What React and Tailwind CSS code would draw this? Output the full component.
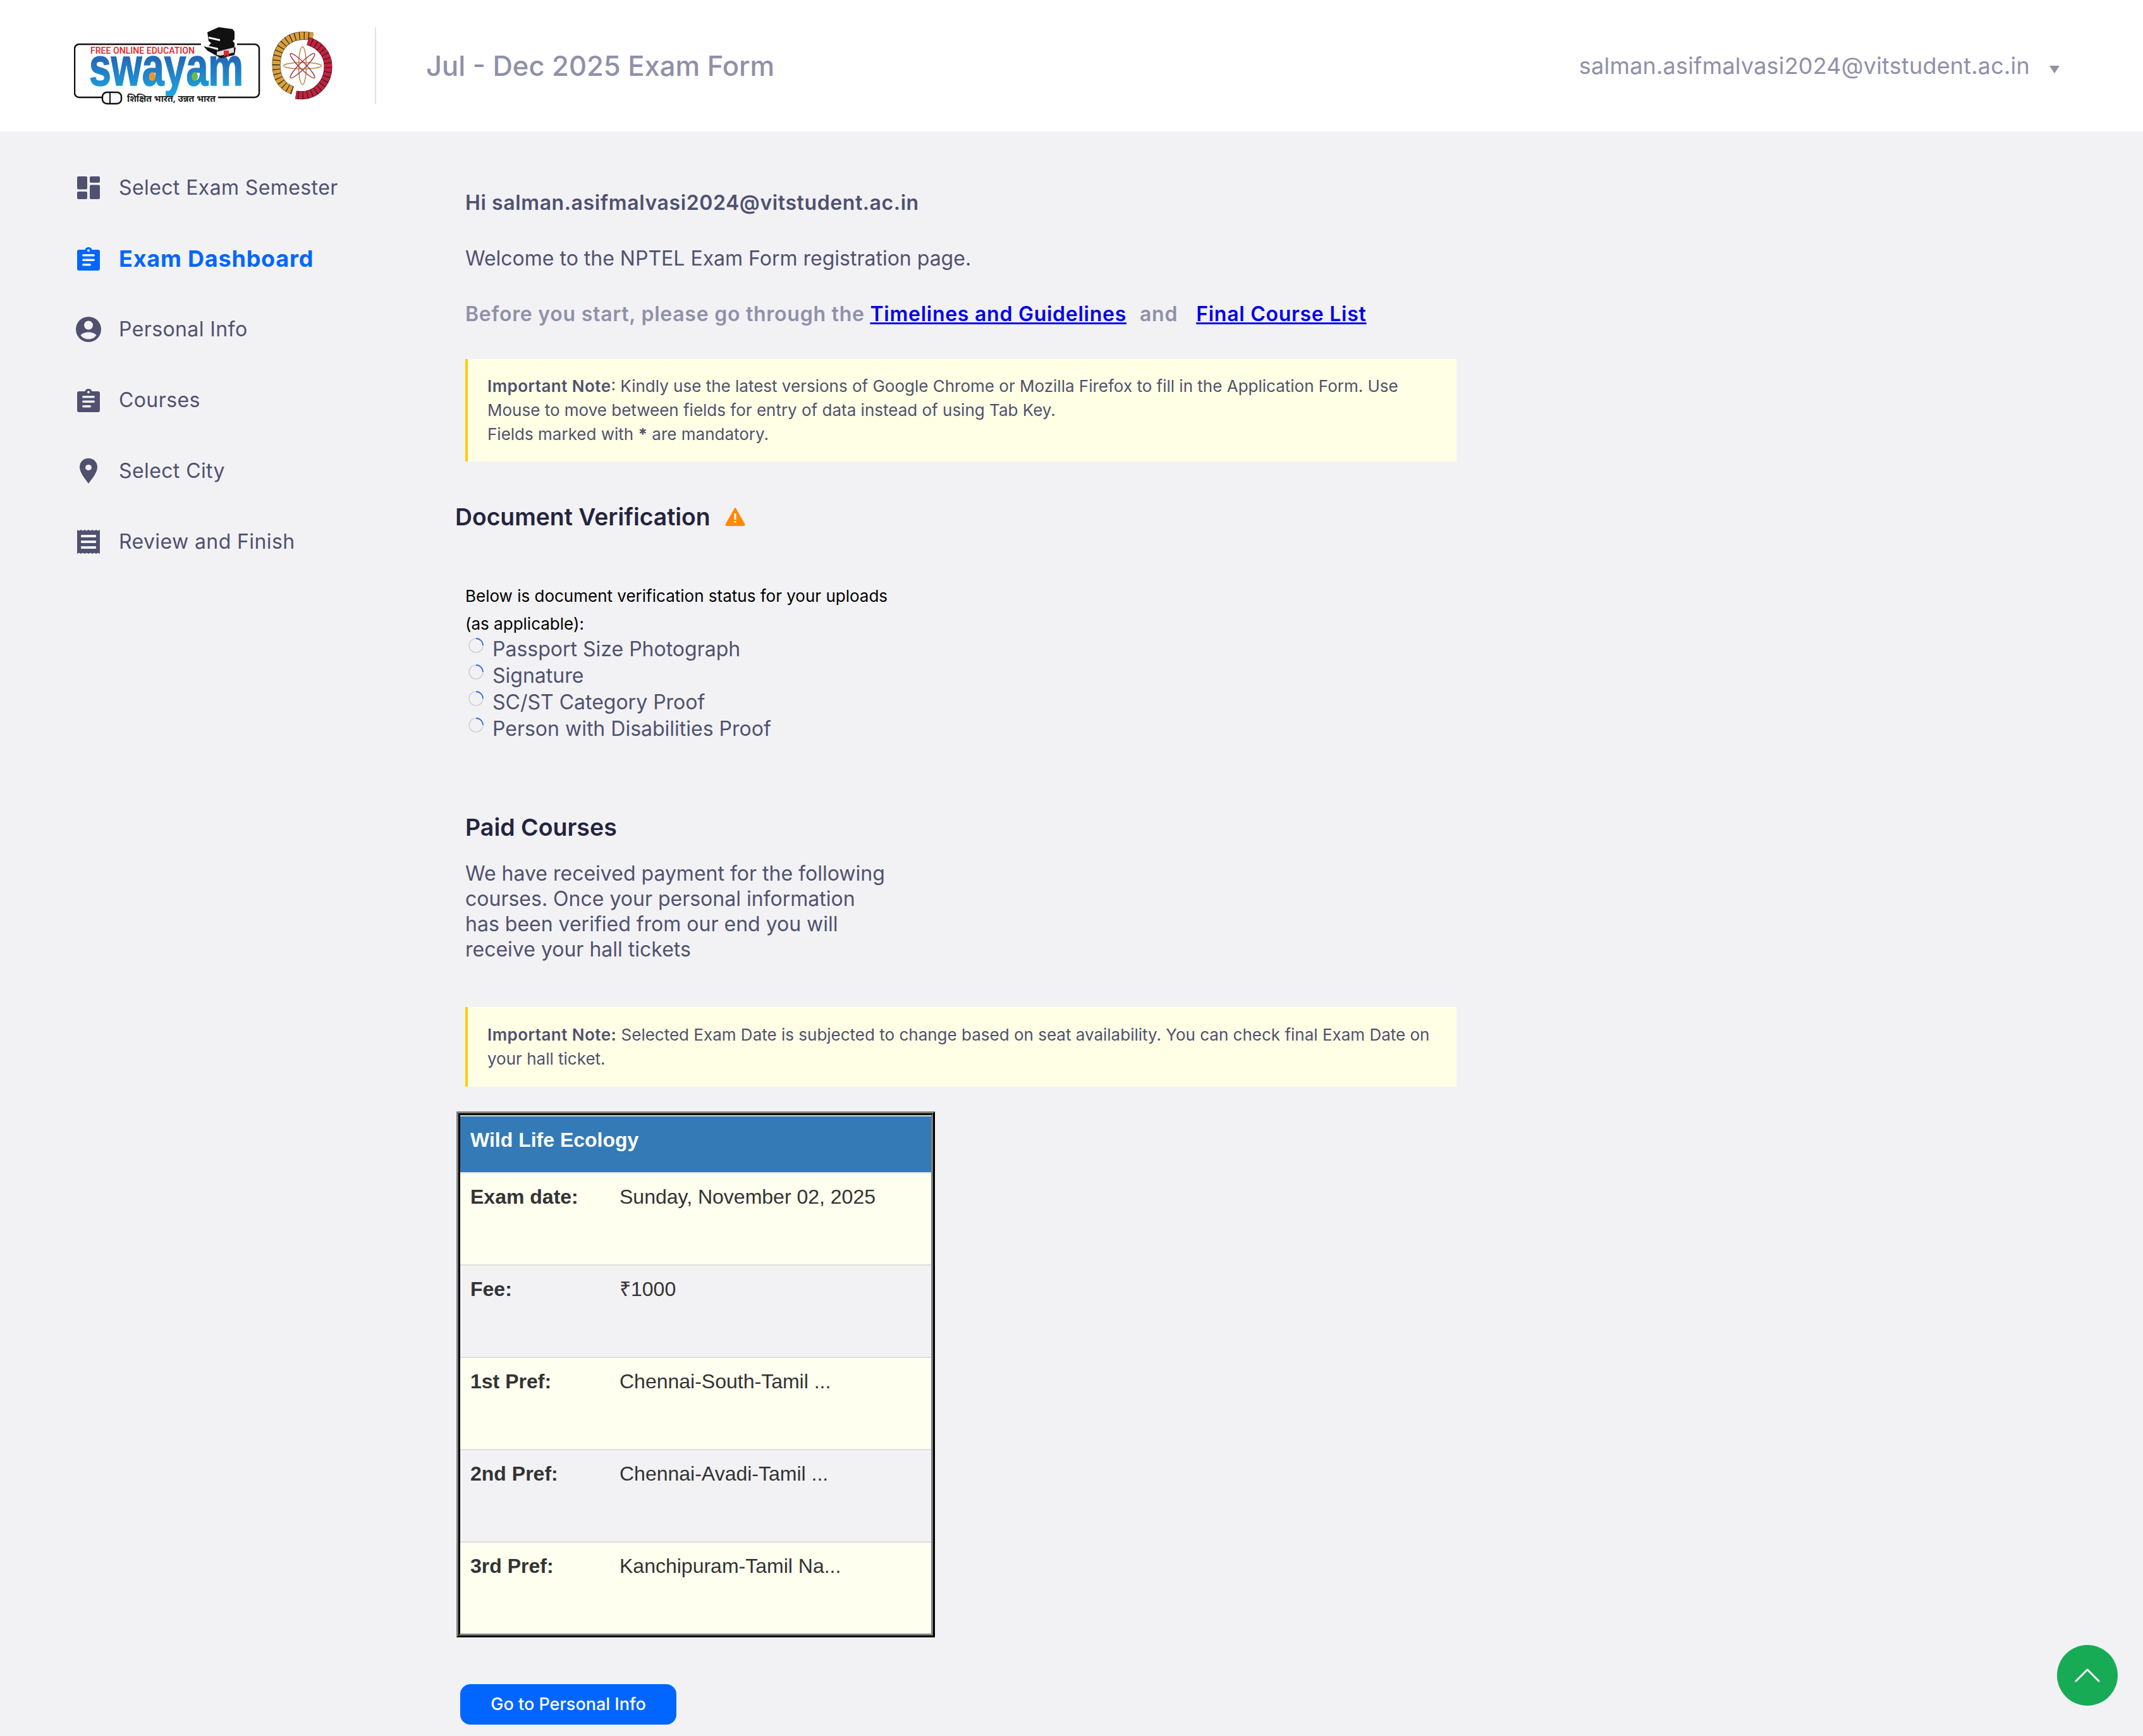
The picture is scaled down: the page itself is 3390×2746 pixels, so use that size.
const Ic = ({ children, active }) => (
  <svg width="40" height="40" viewBox="0 0 40 40" className={active ? "text-[#0066ff] shrink-0" : "text-[#50516f] shrink-0"} fill="currentColor">{children}</svg>
);
const Clip = () => (
  <>
    <path fillRule="evenodd" d="M5 6h9.500c.6-2.600 2.800-4 5.500-4s4.900 1.400 5.500 4H35a3 3 0 0 1 3 3v27a3 3 0 0 1-3 3H5a3 3 0 0 1-3-3V9a3 3 0 0 1 3-3zm15-.8a2 2 0 1 0 0 4 2 2 0 0 0 0-4z" />
    <g fill="#f2f2f5"><rect x="10" y="13" width="20" height="3.400" rx="1.700" /><rect x="10" y="20.500" width="20" height="3.400" rx="1.700" /><rect x="10" y="28" width="14" height="3.400" rx="1.700" /></g>
  </>
);
const items = [
  ["Select Exam Semester", <><rect x="2" y="2" width="16" height="20.500" rx="2" /><rect x="22" y="2" width="16" height="10" rx="2" /><rect x="2" y="26" width="16" height="12" rx="2" /><rect x="22" y="15.500" width="16" height="22.500" rx="2" /></>],
  ["Exam Dashboard", <Clip />],
  ["Personal Info", <path fillRule="evenodd" d="M20 0a20 20 0 1 0 0 40 20 20 0 0 0 0-40zm0 6.500a7 7 0 1 1 0 14 7 7 0 0 1 0-14zm0 29c-5.400 0-10-2.500-12.500-6.300 2-3 7.500-4.700 12.500-4.700s10.500 1.700 12.500 4.700C30 33 25.400 35.500 20 35.500z" />],
  ["Courses", <Clip />],
  ["Select City", <path fillRule="evenodd" d="M20 0C10.500 0 6 7 6 14c0 9 10 20 14 26 4-6 14-17 14-26C34 7 29.500 0 20 0zm0 10a5 4.500 0 1 1 0 9 5 4.500 0 0 1 0-9z" />],
  ["Review and Finish", <><path d="M2 1l3 1.500L8 1l3 1.500L14 1l3 1.500L20 1l3 1.500L26 1l3 1.500L32 1l3 1.500L38 1v38l-3-1.500-3 1.500-3-1.500-3 1.500-3-1.500-3 1.500-3-1.500-3 1.500-3-1.500-3 1.500-3-1.500L2 39z" /><g fill="#f2f2f5"><rect x="8" y="9" width="24" height="4" rx="1" /><rect x="8" y="18" width="24" height="4" rx="1" /><rect x="8" y="27" width="24" height="4" rx="1" /></g></>],
];
const Logo = () => (
  <svg width="415" height="128" viewBox="117 40 415 128" className="ml-[117px] shrink-0">
    <defs>
      <linearGradient id="sw" x1="0" y1="0" x2="0" y2="1"><stop offset="0" stopColor="#2647a0" /><stop offset="1" stopColor="#1ca9e2" /></linearGradient>
    </defs>
    <path d="M318 70H125a7 7 0 0 0-7 7v70a7 7 0 0 0 7 7h37M345 154h58a7 7 0 0 0 7-7V77a7 7 0 0 0-7-7h-28" fill="none" stroke="#111" strokeWidth="2.500" />
    <rect x="162" y="146" width="30" height="18" rx="7" fill="#fff" stroke="#111" strokeWidth="2.500" />
    <line x1="174" y1="146" x2="174" y2="164" stroke="#111" strokeWidth="2" />
    <text x="143" y="85" fontFamily="Roboto, sans-serif" fontSize="15" fontWeight="500" fill="#e2262b" textLength="165" lengthAdjust="spacingAndGlyphs">FREE ONLINE EDUCATION</text>
    <text x="141" y="135" fontFamily="Liberation Sans, sans-serif" fontSize="85" fontWeight="700" fill="url(#sw)" stroke="url(#sw)" strokeWidth="1.500" textLength="244" lengthAdjust="spacingAndGlyphs">swayam</text>
    <ellipse cx="241" cy="121" rx="5" ry="7" fill="#f0952a" />
    <ellipse cx="308" cy="121" rx="5" ry="7" fill="#6db94a" />
    <text x="201" y="161" fontFamily="Noto Sans, DejaVu Sans, sans-serif" fontSize="15" fontWeight="700" fill="#222" textLength="140" lengthAdjust="spacingAndGlyphs">शिक्षित भारत, उन्नत भारत</text>
    <g>
      <path d="M328 51l18-8 22 3 3 4v12l-3 3 3 3v13l-8 3-14-3-21-6 6-7-4-3z" fill="#111" />
      <path d="M322 73l23 7 28-5-2 12-22 5-21-12z" fill="#111" />
      <path d="M343 82l27-7v8l-21 5-6-1z" fill="#ddd" />
      <path d="M330 58l18 4v3l-18-4zM327 72l18 4v3l-18-5z" fill="#fff" />
      <path d="M354 80h8v10l-4-3-4 3z" fill="#e2262b" />
    </g>
    <g fill="none">
      <path d="M495 58C455 50 437 75 437 103c0 22 11 35 26 40" stroke="#222" strokeWidth="13" />
      <path d="M495 58C455 50 437 75 437 103c0 22 11 35 26 40" stroke="#dc9f37" strokeWidth="12" strokeDasharray="6 1.200" />
      <path d="M487 65c18 5 32 20 32 40 0 25-19 50-51 45" stroke="#222" strokeWidth="13" />
      <path d="M487 65c18 5 32 20 32 40 0 25-19 50-51 45" stroke="#c5203f" strokeWidth="12" strokeDasharray="6 1.200" />
      <g strokeWidth="1.500">
        <ellipse cx="478.500" cy="104" rx="6" ry="30" stroke="#b9854a" />
        <ellipse cx="478.500" cy="104" rx="30" ry="5" stroke="#b9854a" />
        <ellipse cx="478.500" cy="104" rx="5" ry="27" stroke="#a33a3f" transform="rotate(45 478.500 104)" />
        <ellipse cx="478.500" cy="104" rx="5" ry="27" stroke="#a33a3f" transform="rotate(-45 478.500 104)" />
      </g>
    </g>
  </svg>
);
const Radio = ({ label }) => (
  <div className="flex h-[42px] items-start">
    <svg width="24" height="24" viewBox="0 0 24 24" className="ml-[5px] mt-[3px] shrink-0">
      <circle cx="12" cy="12" r="11" fill="none" stroke="#c8c8ce" strokeWidth="1.200" />
      <path d="M12 1A11 11 0 0 1 23 12" fill="none" stroke="#2f6fe0" strokeWidth="1.800" />
    </svg>
    <span className="ml-[14px] text-[32px] leading-[42px] text-[#50516f]">{label}</span>
  </div>
);
const rows = [
  ["Exam date:", "Sunday, November 02, 2025", "bg-[#ffffef]"],
  ["Fee:", "₹1000", "bg-[#f2f2f5]"],
  ["1st Pref:", "Chennai-South-Tamil ...", "bg-[#ffffef]"],
  ["2nd Pref:", "Chennai-Avadi-Tamil ...", "bg-[#f2f2f5]"],
  ["3rd Pref:", "Kanchipuram-Tamil Na...", "bg-[#ffffef]"],
];
export default function App() {
  return (
    <div className="relative min-h-[2746px] bg-[#f2f2f5] font-['Inter',sans-serif]">
      <header className="flex h-[208px] items-center bg-white">
        <Logo />
        <div className="ml-[61px] h-[122px] w-[2px] bg-[#e2e2e8]" />
        <h1 className="ml-[79px] pt-[1px] text-[43.500px] font-medium text-[#9090a9]">Jul - Dec 2025 Exam Form</h1>
        <div className="ml-auto mr-[132px] flex items-center">
          <span className="text-[36px] tracking-[0.2px] text-[#9090a9]">salman.asifmalvasi2024@vitstudent.ac.in</span>
          <span className="ml-[31px] mt-[12px] h-0 w-0 border-x-[8px] border-t-[12px] border-x-transparent border-t-[#9090a9]" />
        </div>
      </header>
      <div className="flex">
        <nav className="w-[720px] shrink-0 pl-[120px] pt-[33px]">
          {items.map(([t, ic], i) => (
            <div key={t} className="flex h-[112px] items-center">
              <Ic active={i === 1}>{ic}</Ic>
              <span className={i === 1 ? "ml-[28px] text-[36px] font-bold tracking-[0.8px] text-[#0066ff]" : "ml-[28px] text-[32px] tracking-[0.4px] text-[#50516f]"}>{t}</span>
            </div>
          ))}
        </nav>
        <main className="flex-1 pt-[91px] pb-[18px]">
          <p className="ml-[16px] text-[32px] font-semibold leading-[44px] tracking-[0.6px] text-[#50516f]">Hi salman.asifmalvasi2024@vitstudent.ac.in</p>
          <p className="ml-[16px] mt-[44px] text-[32px] leading-[44px] text-[#50516f]">Welcome to the NPTEL Exam Form registration page.</p>
          <p className="ml-[16px] mt-[44px] text-[32px] font-semibold leading-[44px] tracking-[0.74px] text-[#9090a9]">
            Before you start, please go through the <a href="#" className="text-[#0000ee] underline">Timelines and Guidelines</a>
            <span className="ml-[21px]">and</span>
            <a href="#" className="ml-[29px] text-[#0000ee] underline">Final Course List</a>
          </p>
          <div className="ml-[16px] mt-[49px] w-[1568px] border-l-[4px] border-[#ffcc00] bg-[#ffffe6] pb-[24px] pl-[31px] pr-[35px] pt-[24px] text-[26px] leading-[38px] text-[#50516f]">
            <b className="font-semibold tracking-[0.45px]">Important Note</b>: Kindly use the latest versions of Google Chrome or Mozilla Firefox to fill in the Application Form. Use Mouse to move between fields for entry of data instead of using Tab Key.<br />
            Fields marked with <b className="font-bold">*</b> are mandatory.
          </div>
          <div className="mt-[64px] flex h-[48px] items-center">
            <h2 className="text-[37.300px] font-semibold text-[#24243e]">Document Verification</h2>
            <svg width="32" height="30" viewBox="0 0 32 30" className="ml-[23px] mb-[2px]">
              <path d="M16 2L30.500 27.500a1 1 0 0 1-1 1.500H2.500a1 1 0 0 1-1-1.500z" fill="#ff8a00" stroke="#ff8a00" strokeLinejoin="round" strokeWidth="2" />
              <rect x="14.500" y="10" width="3" height="10" fill="#fff" />
              <rect x="14.500" y="22" width="3" height="3" fill="#fff" />
            </svg>
          </div>
          <p className="ml-[16px] mt-[79px] w-[690px] text-[26px] leading-[44px] text-black">Below is document verification status for your uploads (as applicable):</p>
          <div className="ml-[16px] mt-[-3px]">
            {["Passport Size Photograph", "Signature", "SC/ST Category Proof", "Person with Disabilities Proof"].map((l) => <Radio key={l} label={l} />)}
          </div>
          <h2 className="ml-[16px] mt-[111px] text-[37.500px] font-semibold leading-[48px] text-[#24243e]">Paid Courses</h2>
          <p className="ml-[16px] mt-[29px] w-[670px] text-[32px] leading-[40px] text-[#50516f]">We have received payment for the following courses. Once your personal information has been verified from our end you will receive your hall tickets</p>
          <div className="ml-[16px] mt-[71px] w-[1568px] border-l-[4px] border-[#ffcc00] bg-[#ffffe6] py-[25px] pl-[31px] pr-[35px] text-[26px] leading-[38px] text-[#50516f]">
            <b className="font-semibold tracking-[0.45px]">Important Note:</b> Selected Exam Date is subjected to change based on seat availability. You can check final Exam Date on your hall ticket.
          </div>
          <div className="ml-[2px] mt-[39px] w-[757px] border-[3px] border-b-black border-l-[#808080] border-r-black border-t-[#808080]">
            <div className="border-[3px] border-b-[#808080] border-l-black border-r-[#808080] border-t-black font-['Liberation_Sans',sans-serif] text-[32px] leading-[42px]">
              <div className="h-[92px] border-y-[2px] border-[#dddddd] bg-[#337ab7] pl-[16px] pt-[16px] font-bold text-white">Wild Life Ecology</div>
              {rows.map(([a, b, bg], i) => (
                <div key={a} className={`flex pl-[16px] pt-[16px] text-[#333333] ${bg} ${i < 4 ? "h-[146px] border-b-[2px] border-[#dddddd]" : "h-[144px]"}`}>
                  <b className="w-[236px] shrink-0 font-bold">{a}</b>
                  <span>{b}</span>
                </div>
              ))}
            </div>
          </div>
          <button className="ml-[8px] mt-[74px] flex h-[64px] w-[342px] items-center justify-center rounded-[16px] bg-[#0066ff] text-[27px] font-medium text-white">Go to Personal Info</button>
        </main>
      </div>
      <button className="absolute left-[3254px] top-[2602px] flex h-[96px] w-[96px] items-center justify-center rounded-full bg-[#18ab55]">
        <svg width="40" height="24" viewBox="0 0 40 24" fill="none" stroke="#fff" strokeWidth="3" strokeLinecap="round" strokeLinejoin="round"><path d="M2 21L20 3l18 18" /></svg>
      </button>
    </div>
  );
}
